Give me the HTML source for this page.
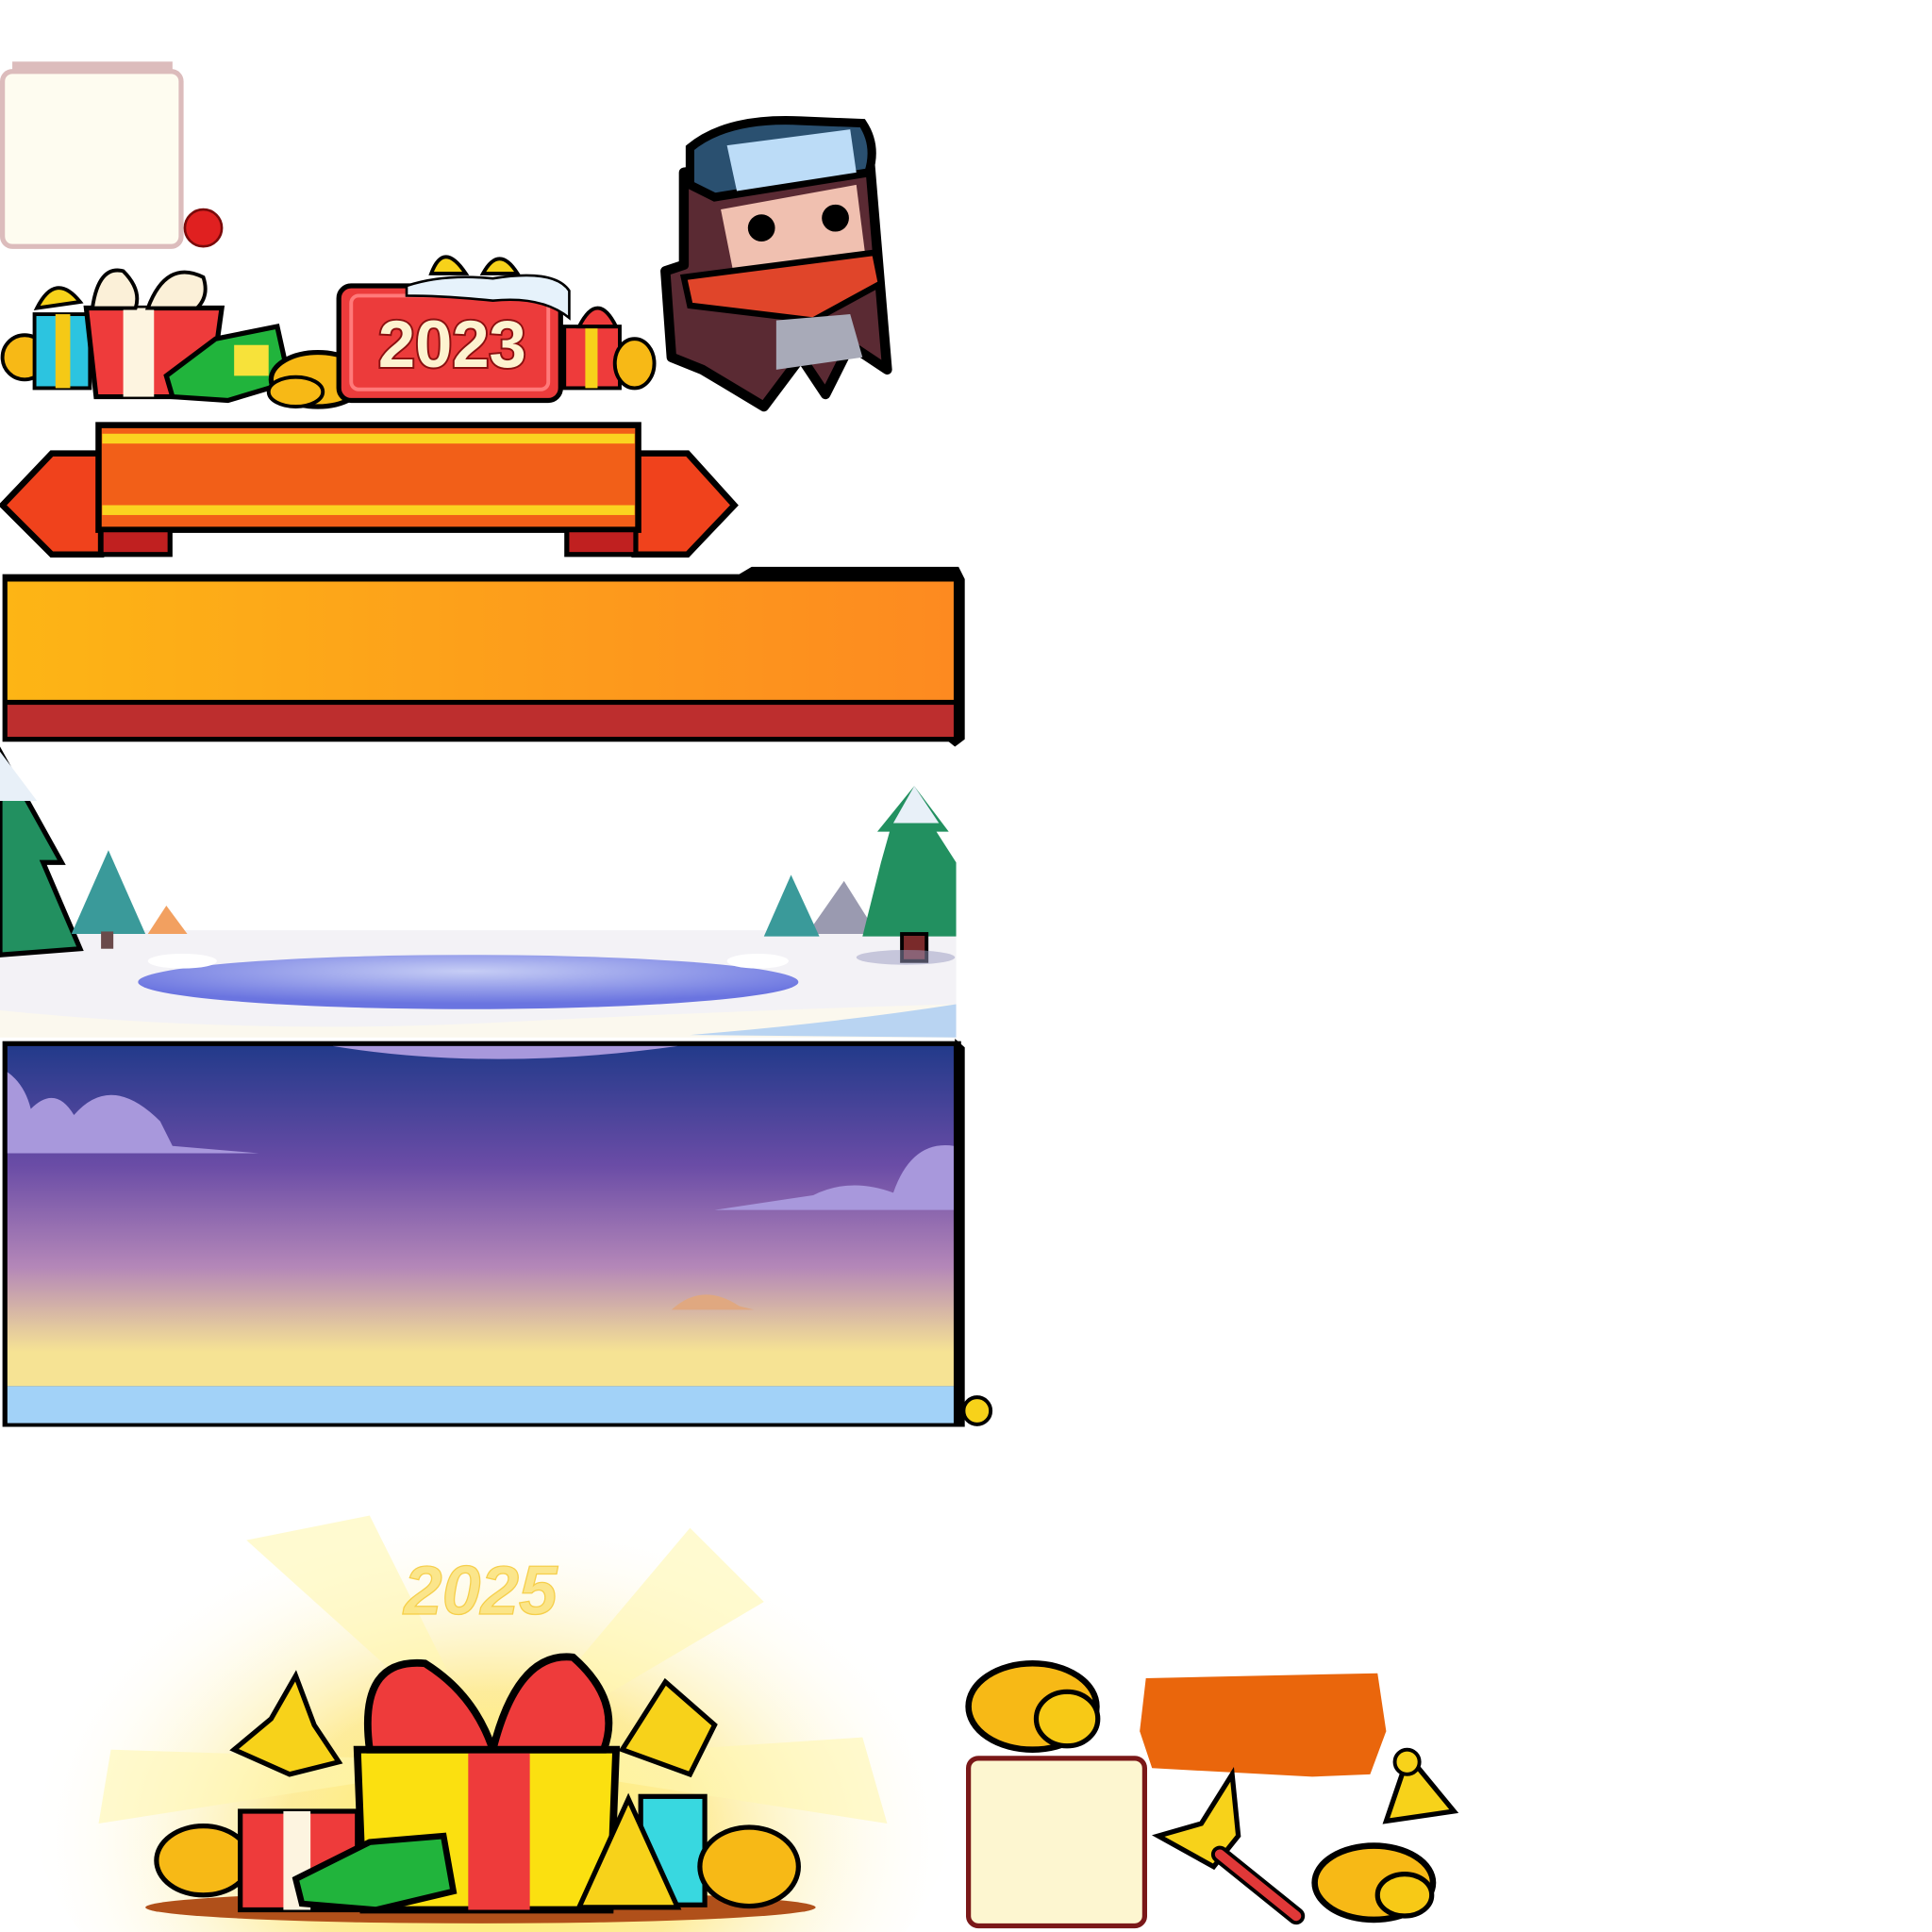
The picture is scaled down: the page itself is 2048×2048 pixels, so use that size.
<!DOCTYPE html>
<html><head><meta charset="utf-8"><style>
html,body{margin:0;padding:0;background:#fff;width:2048px;height:2048px;overflow:hidden;position:relative}
svg{display:block;overflow:hidden;position:absolute;left:0;top:0}
</style></head><body>
<svg width="2048" height="2048" viewBox="0 0 1568 1568" xmlns="http://www.w3.org/2000/svg">
<defs>
<linearGradient id="bar" x1="0" x2="1"><stop offset="0" stop-color="#fdb515"/><stop offset="1" stop-color="#fd8a20"/></linearGradient>
<linearGradient id="sky" x1="0" y1="0" x2="0" y2="1"><stop offset="0" stop-color="#223a8a"/><stop offset="0.35" stop-color="#6a4ca6"/><stop offset="0.65" stop-color="#b487b8"/><stop offset="0.9" stop-color="#f6e394"/></linearGradient>
<radialGradient id="glow" cx="0.5" cy="0.6" r="0.5"><stop offset="0" stop-color="#fff05a"/><stop offset="0.45" stop-color="#fde98a" stop-opacity="0.85"/><stop offset="1" stop-color="#fff" stop-opacity="0"/></radialGradient>
<radialGradient id="ice" cx="0.5" cy="0.3" r="0.6"><stop offset="0" stop-color="#c6cdf5"/><stop offset="1" stop-color="#6a74e0"/></radialGradient>
</defs>
<rect x="10" y="50" width="130" height="10" fill="#dcbcbc"/>
<rect x="2" y="58" width="145" height="142" rx="8" fill="#fefcf0" stroke="#dcbcbc" stroke-width="4"/>
<circle cx="165" cy="185" r="15" fill="#e02020" stroke="#7a0a0a" stroke-width="2"/>
<circle cx="20" cy="290" r="18" fill="#f7b916" stroke="#000" stroke-width="3"/>
<rect x="28" y="255" width="45" height="60" fill="#2cc4e0" stroke="#000" stroke-width="3"/>
<rect x="45" y="255" width="12" height="60" fill="#f5c916"/>
<path d="M70 250 L180 250 L170 322 L78 322Z" fill="#ee3b3b" stroke="#000" stroke-width="4"/>
<rect x="100" y="250" width="25" height="72" fill="#fdf4e0"/>
<path d="M75 250 Q80 215 100 220 Q115 235 110 250Z M120 250 Q135 210 165 225 Q170 240 160 250Z" fill="#fbf0d8" stroke="#000" stroke-width="3"/>
<path d="M30 250 Q45 220 65 245Z" fill="#f7d21a" stroke="#000" stroke-width="3"/>
<path d="M135 305 L175 275 L225 265 L235 310 L185 325 L140 322Z" fill="#21b43c" stroke="#000" stroke-width="4"/>
<rect x="190" y="280" width="28" height="25" fill="#f7e23a"/>
<ellipse cx="258" cy="308" rx="38" ry="22" fill="#f7b916" stroke="#000" stroke-width="4"/>
<ellipse cx="240" cy="318" rx="22" ry="12" fill="#f7b916" stroke="#000" stroke-width="3"/>
<path d="M350 222 Q360 195 378 222Z M392 222 Q405 198 420 222Z" fill="#f7d21a" stroke="#000" stroke-width="3"/>
<rect x="275" y="232" width="180" height="93" rx="10" fill="#ec3b3b" stroke="#000" stroke-width="4"/>
<rect x="285" y="240" width="160" height="76" rx="6" fill="none" stroke="#ff7a7a" stroke-width="3"/>
<path d="M330 232 Q360 222 400 226 Q450 218 462 236 L462 258 Q440 240 400 244 Q360 240 330 240Z" fill="#e6f2fb" stroke="#000" stroke-width="2"/>
<text x="367" y="298" text-anchor="middle" font-family="Liberation Sans, sans-serif" font-weight="bold" font-size="54" fill="#fdf3d0" stroke="#8a1010" stroke-width="3" paint-order="stroke">2023</text>
<rect x="458" y="265" width="45" height="50" fill="#ee3b3b" stroke="#000" stroke-width="3"/>
<rect x="475" y="265" width="10" height="50" fill="#f7d21a"/>
<path d="M470 265 Q485 235 500 265Z" fill="#ee3b3b" stroke="#000" stroke-width="3"/>
<ellipse cx="515" cy="295" rx="16" ry="20" fill="#f7b916" stroke="#000" stroke-width="3"/>
<path d="M555 140 L705 120 L720 300 L690 280 L670 320 L650 290 L620 330 L570 300 L545 290 L540 220 L555 215Z" fill="#5a2a33" stroke="#000" stroke-width="8" stroke-linejoin="round"/>
<path d="M585 170 L695 150 L702 205 L595 220Z" fill="#f0c0b0"/>
<circle cx="618" cy="185" r="11" fill="#000"/><circle cx="678" cy="177" r="11" fill="#000"/>
<path d="M555 225 L710 205 L715 230 L660 260 L560 248Z" fill="#e0452a" stroke="#000" stroke-width="5"/>
<path d="M630 260 L690 255 L700 290 L630 300Z" fill="#a8aab8"/>
<path d="M560 120 Q590 95 650 98 L700 100 Q712 118 705 140 L580 160 L560 150Z" fill="#2a5070" stroke="#000" stroke-width="7"/>
<path d="M590 118 L690 105 L695 140 L598 155Z" fill="#bcdcf7"/>
<path d="M2 410 L42 368 L82 368 L82 450 L42 450Z" fill="#f0421c" stroke="#000" stroke-width="5"/>
<path d="M596 410 L558 368 L515 368 L515 450 L558 450Z" fill="#f0421c" stroke="#000" stroke-width="5"/>
<rect x="80" y="345" width="438" height="85" fill="#f25f18" stroke="#000" stroke-width="5"/>
<rect x="83" y="352" width="432" height="8" fill="#fbd420"/>
<rect x="83" y="410" width="432" height="8" fill="#fbd420"/>
<rect x="82" y="430" width="56" height="20" fill="#c02020" stroke="#000" stroke-width="4"/>
<rect x="460" y="430" width="56" height="20" fill="#c02020" stroke="#000" stroke-width="4"/>
<rect x="2" y="466" width="778" height="136" fill="#000"/>
<path d="M600 466 L610 460 L778 460 L783 470 L783 600 L775 606Z" fill="#000"/>
<rect x="6" y="472" width="768" height="96" fill="url(#bar)"/>
<rect x="6" y="572" width="768" height="26" fill="#bd2e2e"/>
<rect x="0" y="755" width="776" height="85" fill="#f3f2f6"/>
<path d="M0 820 Q200 840 400 830 Q600 820 776 815 L776 842 L0 842Z" fill="#fbf8ee"/>
<path d="M560 840 Q680 830 776 815 L776 842Z" fill="#b9d4f2"/>
<ellipse cx="380" cy="797" rx="268" ry="22" fill="url(#ice)"/>
<ellipse cx="148" cy="780" rx="28" ry="6" fill="#fff"/><ellipse cx="615" cy="780" rx="25" ry="6" fill="#fff"/>
<path d="M0 610 L50 700 L35 700 L65 770 L0 775Z" fill="#229060" stroke="#000" stroke-width="4"/>
<path d="M0 610 L30 650 L0 650Z" fill="#e8f0f8"/>
<path d="M88 690 L118 758 L58 758Z" fill="#3a9a9a"/>
<rect x="82" y="756" width="10" height="14" fill="#6a4a4a"/>
<path d="M120 758 L135 735 L152 758Z" fill="#f2a060"/>
<path d="M655 758 L685 715 L712 758Z" fill="#9a9ab0"/>
<path d="M642 710 L665 760 L620 760Z" fill="#3a9a9a"/>
<path d="M742 638 L770 675 L760 675 L776 700 L776 760 L700 760 L715 700 L722 675 L712 675Z" fill="#229060"/>
<path d="M742 638 L762 668 L725 668Z" fill="#e8f0f8"/>
<rect x="732" y="758" width="20" height="22" fill="#7a2a2a" stroke="#000" stroke-width="3"/>
<ellipse cx="735" cy="777" rx="40" ry="6" fill="#9a9ac0" opacity="0.5"/>
<rect x="2" y="845" width="778" height="313" fill="#000"/>
<path d="M775 843 L783 850 L783 1158 L775 1158Z" fill="#000"/>
<rect x="6" y="849" width="768" height="276" fill="url(#sky)"/>
<rect x="6" y="1125" width="768" height="30" fill="#a2d2f8"/>
<path d="M270 849 Q400 870 550 849Z" fill="#a898dc"/>
<path d="M6 870 Q20 880 25 900 Q45 880 60 905 Q90 870 130 910 L140 930 L210 936 L6 936Z" fill="#a898dc"/>
<path d="M774 930 Q740 925 725 968 Q690 955 660 970 L580 982 L774 982Z" fill="#a898dc"/>
<path d="M545 1063 Q570 1040 600 1060 L612 1063Z" fill="#e0a880"/>
<circle cx="793" cy="1145" r="11" fill="#f7d21a" stroke="#000" stroke-width="3"/>
<ellipse cx="400" cy="1440" rx="380" ry="270" fill="url(#glow)"/>
<path d="M400 1430 L200 1250 L300 1230Z M400 1430 L560 1240 L620 1300Z M400 1430 L80 1480 L90 1420Z M400 1430 L720 1480 L700 1410Z" fill="#fff6b0" opacity="0.6"/>
<text x="390" y="1310" text-anchor="middle" font-family="Liberation Sans, sans-serif" font-weight="bold" font-style="italic" font-size="56" fill="#fbe27a" stroke="#f5c830" stroke-width="1" opacity="0.85">2025</text>
<ellipse cx="390" cy="1548" rx="272" ry="13" fill="#b0501a"/>
<path d="M190 1420 L220 1395 L240 1360 L255 1400 L275 1430 L235 1440Z" fill="#f7d21a" stroke="#000" stroke-width="4"/>
<ellipse cx="165" cy="1510" rx="38" ry="28" fill="#f7b916" stroke="#000" stroke-width="4"/>
<rect x="195" y="1470" width="95" height="80" fill="#ee3b3b" stroke="#000" stroke-width="4"/>
<rect x="230" y="1470" width="22" height="80" fill="#fdf4e0"/>
<path d="M290 1420 L500 1420 L495 1550 L295 1550Z" fill="#fbe010" stroke="#000" stroke-width="6"/>
<rect x="380" y="1420" width="50" height="130" fill="#ee3b3b"/>
<path d="M300 1420 Q290 1345 345 1350 Q385 1375 400 1420Z M400 1420 Q420 1340 465 1345 Q505 1380 490 1420Z" fill="#ee3b3b" stroke="#000" stroke-width="6"/>
<path d="M240 1525 L300 1495 L360 1490 L368 1535 L305 1550 L245 1545Z" fill="#21b43c" stroke="#000" stroke-width="5"/>
<path d="M505 1420 L540 1365 L580 1400 L560 1440Z" fill="#f7d21a" stroke="#000" stroke-width="4"/>
<rect x="520" y="1458" width="52" height="88" fill="#38d8e0" stroke="#000" stroke-width="4"/>
<path d="M470 1548 L510 1460 L550 1548Z" fill="#f7d21a" stroke="#000" stroke-width="4"/>
<ellipse cx="608" cy="1515" rx="40" ry="32" fill="#f7b916" stroke="#000" stroke-width="4"/>
<ellipse cx="838" cy="1385" rx="52" ry="35" fill="#f7b916" stroke="#000" stroke-width="5"/>
<ellipse cx="866" cy="1395" rx="25" ry="22" fill="#f7c916" stroke="#000" stroke-width="4"/>
<path d="M930 1362 L1118 1358 L1125 1405 L1112 1440 L1065 1442 L935 1435 L925 1405Z" fill="#ea660c"/>
<rect x="786" y="1427" width="143" height="136" rx="8" fill="#fdf6d0" stroke="#7a1818" stroke-width="4"/>
<path d="M940 1490 L975 1480 L1000 1440 L1005 1490 L985 1515Z" fill="#f7d21a" stroke="#000" stroke-width="4"/>
<path d="M990 1505 L1052 1555" stroke="#000" stroke-width="14" stroke-linecap="round"/>
<path d="M990 1505 L1052 1555" stroke="#e03838" stroke-width="8" stroke-linecap="round"/>
<path d="M1125 1478 L1143 1425 L1180 1470Z" fill="#f7d21a" stroke="#000" stroke-width="4"/>
<circle cx="1142" cy="1430" r="10" fill="#f7d21a" stroke="#000" stroke-width="3"/>
<ellipse cx="1115" cy="1528" rx="48" ry="30" fill="#f7b916" stroke="#000" stroke-width="5"/>
<ellipse cx="1140" cy="1538" rx="22" ry="17" fill="#f7c916" stroke="#000" stroke-width="4"/>
</svg>
</body></html>
